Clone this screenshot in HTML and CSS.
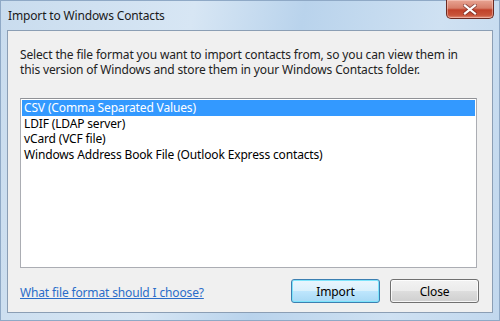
FILE: index.html
```html
<!DOCTYPE html>
<html lang="en">
<head>
  <meta charset="UTF-8">
  <title>Import to Windows Contacts</title>
  <link rel="stylesheet" href="styles.css">
</head>
<body>
  <div class="window">
    <div class="titlebar">
      <span class="title">Import to Windows Contacts</span>
      <button class="close-x" aria-label="Close">
        <svg width="14" height="11" viewBox="0 0 14 11">
          <path d="M2 1.5 L12 9.5 M12 1.5 L2 9.5" stroke="#5a2020" stroke-width="4" stroke-linecap="square" opacity="0.55"/>
          <path d="M2 1.5 L12 9.5 M12 1.5 L2 9.5" stroke="#ffffff" stroke-width="2.2" stroke-linecap="square"/>
        </svg>
      </button>
    </div>

    <div class="client">
      <p class="intro">Select the file format you want to import contacts from, so you can view them in this version of Windows and store them in your Windows Contacts folder.</p>

      <ul class="formats">
        <li class="selected">CSV (Comma Separated Values)</li>
        <li>LDIF (LDAP server)</li>
        <li>vCard (VCF file)</li>
        <li>Windows Address Book File (Outlook Express contacts)</li>
      </ul>

      <div class="footer">
        <a href="#" class="help">What file format should I choose?</a>
        <div class="actions">
          <button class="btn default">Import</button>
          <button class="btn">Close</button>
        </div>
      </div>
    </div>
  </div>
</body>
</html>
```

FILE: styles.css
```css
* {
  box-sizing: border-box;
  margin: 0;
  padding: 0;
}

body {
  width: 500px;
  height: 321px;
  font-family: "Noto Sans", "Open Sans", sans-serif;
  font-size: 12px;
  letter-spacing: -0.15px;
  color: #000;
  overflow: hidden;
}

.window {
  width: 500px;
  height: 321px;
  display: flex;
  flex-direction: column;
  border: 1px solid #8fa9c6;
  background: linear-gradient(100deg, #c9dcee 0%, #d7e6f4 35%, #b9d3ec 55%, #cfe1f2 80%, #c2d8ee 100%);
}

.titlebar {
  height: 29px;
  display: flex;
  align-items: flex-start;
  justify-content: space-between;
  padding-left: 7px;
}

.title {
  margin-top: 6px;
  font-size: 12px;
  color: #1a1a1a;
}

.close-x {
  width: 48px;
  height: 19px;
  margin-right: 5px;
  margin-top: -1px;
  border: 1px solid #6b2a22;
  border-top: none;
  border-radius: 0 0 5px 5px;
  background: linear-gradient(#e8a493 0%, #d77e69 45%, #c1412a 55%, #c8543a 85%, #e3917c 100%);
  box-shadow: inset 0 0 0 1px rgba(255, 220, 210, 0.45);
  display: flex;
  align-items: center;
  justify-content: center;
}

.client {
  flex: 1;
  margin: 0 6px 7px 6px;
  border: 1px solid #8b9eb4;
  background: #f0f0f0;
  padding: 16px 15px 0 12px;
  display: flex;
  flex-direction: column;
}

.intro {
  line-height: 15px;
  color: #222;
}

.formats {
  list-style: none;
  margin-top: 21px;
  height: 170px;
  background: #fff;
  border: 1px solid #abadb3;
  border-top-color: #8f9196;
  padding: 1px;
}

.formats li {
  height: 15.5px;
  line-height: 15px;
  padding-left: 2px;
  white-space: nowrap;
}

.formats li.selected {
  background: #3399ff;
  color: #fff;
}

.footer {
  margin-top: auto;
  height: 40px;
  display: flex;
  align-items: flex-start;
  justify-content: space-between;
  padding-top: 7px;
}

.help {
  color: #2a6dc9;
  text-decoration: underline;
  margin-top: 5px;
}

.actions {
  display: flex;
  gap: 10px;
  margin-right: -2px;
}

.btn {
  width: 89px;
  height: 24px;
  font-family: inherit;
  font-size: 12px;
  letter-spacing: inherit;
  color: #000;
  border: 1px solid #707070;
  border-radius: 3px;
  background: linear-gradient(#f2f2f2 0%, #ebebeb 50%, #dddddd 51%, #cfcfcf 100%);
  box-shadow: inset 0 0 0 1px rgba(255, 255, 255, 0.8);
}

.btn.default {
  border-color: #3c7fb1;
  background: linear-gradient(#eaf6fd 0%, #d9f0fc 50%, #bee6fd 51%, #a7d9f5 100%);
  box-shadow: inset 0 0 0 1px #7de4fb;
}
```
